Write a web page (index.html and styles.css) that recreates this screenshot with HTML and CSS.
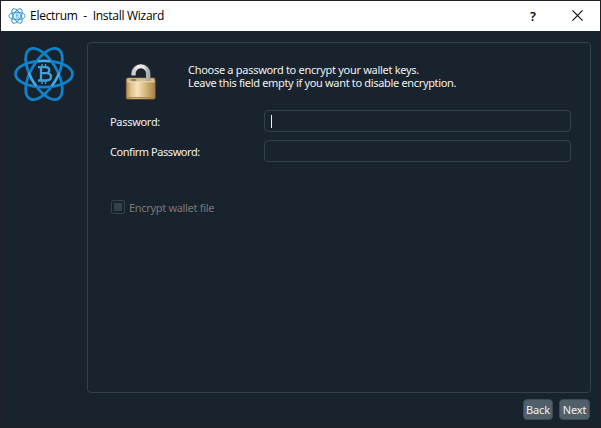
FILE: index.html
```html
<!DOCTYPE html>
<html lang="en">
<head>
<meta charset="utf-8">
<title>Electrum - Install Wizard</title>
<link rel="stylesheet" href="styles.css">
</head>
<body>
<svg class="defs" width="0" height="0" aria-hidden="true">
  <symbol id="atom" viewBox="0 0 62 56">
    <g fill="none" stroke="#0f82cc" stroke-width="2.8">
      <ellipse cx="31" cy="28" rx="28.5" ry="13.2"/>
      <ellipse cx="31" cy="28" rx="28.5" ry="13.2" transform="rotate(60 31 28)"/>
      <ellipse cx="31" cy="28" rx="28.5" ry="13.2" transform="rotate(-60 31 28)"/>
    </g>
    <g fill="none" stroke="#4aa9e3" stroke-width="2.4" stroke-linecap="round">
      <path d="M25.5 15.1Q31 14.6 36.5 15.1M16.2 27.5Q17.3 31 19.6 34.6T22.6 39M45.8 27.5Q44.7 31 42.4 34.6T39.4 39"/>
    </g>
    <path fill="none" stroke="#3fa0dc" stroke-width="2.3" d="M25 21.1h7.5c5 0 5 6.1 0 6.1h-4h5c6 0 6 7.3 0 7.3H25M28 21v14"/>
    <path fill="none" stroke="#3fa0dc" stroke-width="1.3" d="M29 18v3M32.5 18v3M29 35v3M32.5 35v3"/>
  </symbol>
</svg>
<div class="window">
  <header class="titlebar">
    <svg class="app-icon"><use href="#atom"/></svg>
    <span class="title">Electrum&nbsp; -&nbsp; Install Wizard</span>
    <span class="help">?</span>
    <svg class="close" viewBox="0 0 10 10"><path d="M.4.4l9.2 9.2M9.6.4L.4 9.6" fill="none" stroke="#000" stroke-width=".95"/></svg>
  </header>
  <main class="content">
    <svg class="logo"><use href="#atom"/></svg>
    <section class="panel">
      <div class="intro">
        <svg class="lock" viewBox="0 0 32 38">
          <defs>
            <linearGradient id="brass">
              <stop offset="0" stop-color="#b28d50"/><stop offset=".16" stop-color="#dfc18b"/>
              <stop offset=".38" stop-color="#f5e3bd"/><stop offset=".65" stop-color="#d7b980"/>
              <stop offset="1" stop-color="#a98149"/>
            </linearGradient>
            <linearGradient id="steel">
              <stop offset="0" stop-color="#ccc"/><stop offset=".35" stop-color="#f0f0f0"/>
              <stop offset=".7" stop-color="#e4e4e4"/><stop offset="1" stop-color="#aaa"/>
            </linearGradient>
          </defs>
          <rect x="1.3" y="15" width="28.8" height="21" rx="1.5" fill="url(#brass)" stroke="#97723d" stroke-width=".8"/>
          <path d="M2.5 15.5h26.4l.6 3H1.9z" fill="#d7bd8c"/>
          <path d="M2 18.8h27.5" stroke="#f2dfb8" stroke-width=".8"/>
          <path d="M2 34.5h27.5" stroke="#b08745" stroke-width="1"/>
          <ellipse cx="8.7" cy="17" rx="3" ry="1.2" fill="#92836b"/>
          <path d="M8.5 12.6V10.5A7.35 7.2 0 0 1 23.2 10.5V18" fill="none" stroke="#8e8e8e" stroke-width="4.6"/>
          <path d="M8.5 12.2V10.5A7.35 7.2 0 0 1 23.2 10.5V17.7" fill="none" stroke="url(#steel)" stroke-width="3.5"/>
        </svg>
        <p class="message"><span class="line1">Choose a password to encrypt your wallet keys.</span><br><span class="line2">Leave this field empty if you want to disable encryption.</span></p>
      </div>
      <div class="form">
        <span class="label-password">Password:</span><div class="field"><i class="caret"></i></div>
        <span class="label-confirm">Confirm Password:</span><div class="field"></div>
      </div>
      <div class="encrypt"><i class="checkbox"></i><span>Encrypt wallet file</span></div>
    </section>
  </main>
  <footer class="actions"><div class="button back">Back</div><div class="button next">Next</div></footer>
</div>
</body>
</html>
```

FILE: styles.css
```css
* { box-sizing: border-box; }
body { margin: 0; }
.defs { display: block; }
.window {
  width: 601px;
  height: 428px;
  display: flex;
  flex-direction: column;
  background: #19232d;
  border: 1px solid #202027;
  color: #f0f0f0;
  font: 11px/13px "Noto Sans", sans-serif;
  white-space: nowrap;
  overflow: hidden;
}
.titlebar {
  height: 30px;
  flex: none;
  display: flex;
  align-items: center;
  background: #fff;
  color: #000;
  font: 12px/16px "Open Sans", sans-serif;
}
.app-icon { width: 18px; height: 16px; margin-left: 7px; }
.title { width: 140px; margin-left: 4px; letter-spacing: -0.27px; }
.help { margin-left: 360px; width: 8px; font-size: 13px; font-weight: 600; }
.close { width: 11px; height: 11px; margin-left: 34px; margin-bottom: 1px; }
.content { display: flex; height: 361px; flex: none; padding: 11px 0 0 12px; }
.logo { width: 62px; height: 56px; margin-top: 4px; flex: none; }
.panel {
  width: 504px;
  height: 351px;
  margin-left: 12px;
  padding: 19px 18px 0 22px;
  border: 1px solid #32414b;
  border-radius: 4px;
}
.intro { display: flex; height: 48px; }
.lock { width: 32px; height: 38px; margin-left: 15px; margin-top: 1px; }
.message { margin: 1px 0 0 31px; }
.line1 { letter-spacing: -0.29px; }
.line2 { letter-spacing: -0.33px; }
.form {
  display: grid;
  grid-template-columns: 154px 307px;
  grid-auto-rows: 22px;
  row-gap: 8px;
  align-items: center;
}
.label-password { letter-spacing: -0.3px; }
.label-confirm { letter-spacing: -0.45px; }
.field {
  display: flex;
  align-items: center;
  height: 22px;
  padding-left: 6px;
  border: 1px solid #32414b;
  border-radius: 4px;
}
.caret { width: 1px; height: 13px; background: #f0f0f0; }
.encrypt { display: flex; align-items: center; height: 14px; margin-top: 38px; color: #787878; letter-spacing: -0.32px; }
.checkbox { width: 14px; height: 14px; margin: 0 4px 0 1px; border: 1px solid #32414b; border-radius: 2px; padding: 2px; background: #32414b content-box; }
.actions { display: flex; gap: 6px; justify-content: flex-end; padding: 7px 10px 0 0; }
.button {
  width: 31px;
  height: 21px;
  display: flex;
  align-items: center;
  justify-content: center;
  border: 1px solid #3d4a54;
  border-radius: 4px;
  background: #505f69;
  letter-spacing: -0.1px;
}
.back { width: 30px; }
```
